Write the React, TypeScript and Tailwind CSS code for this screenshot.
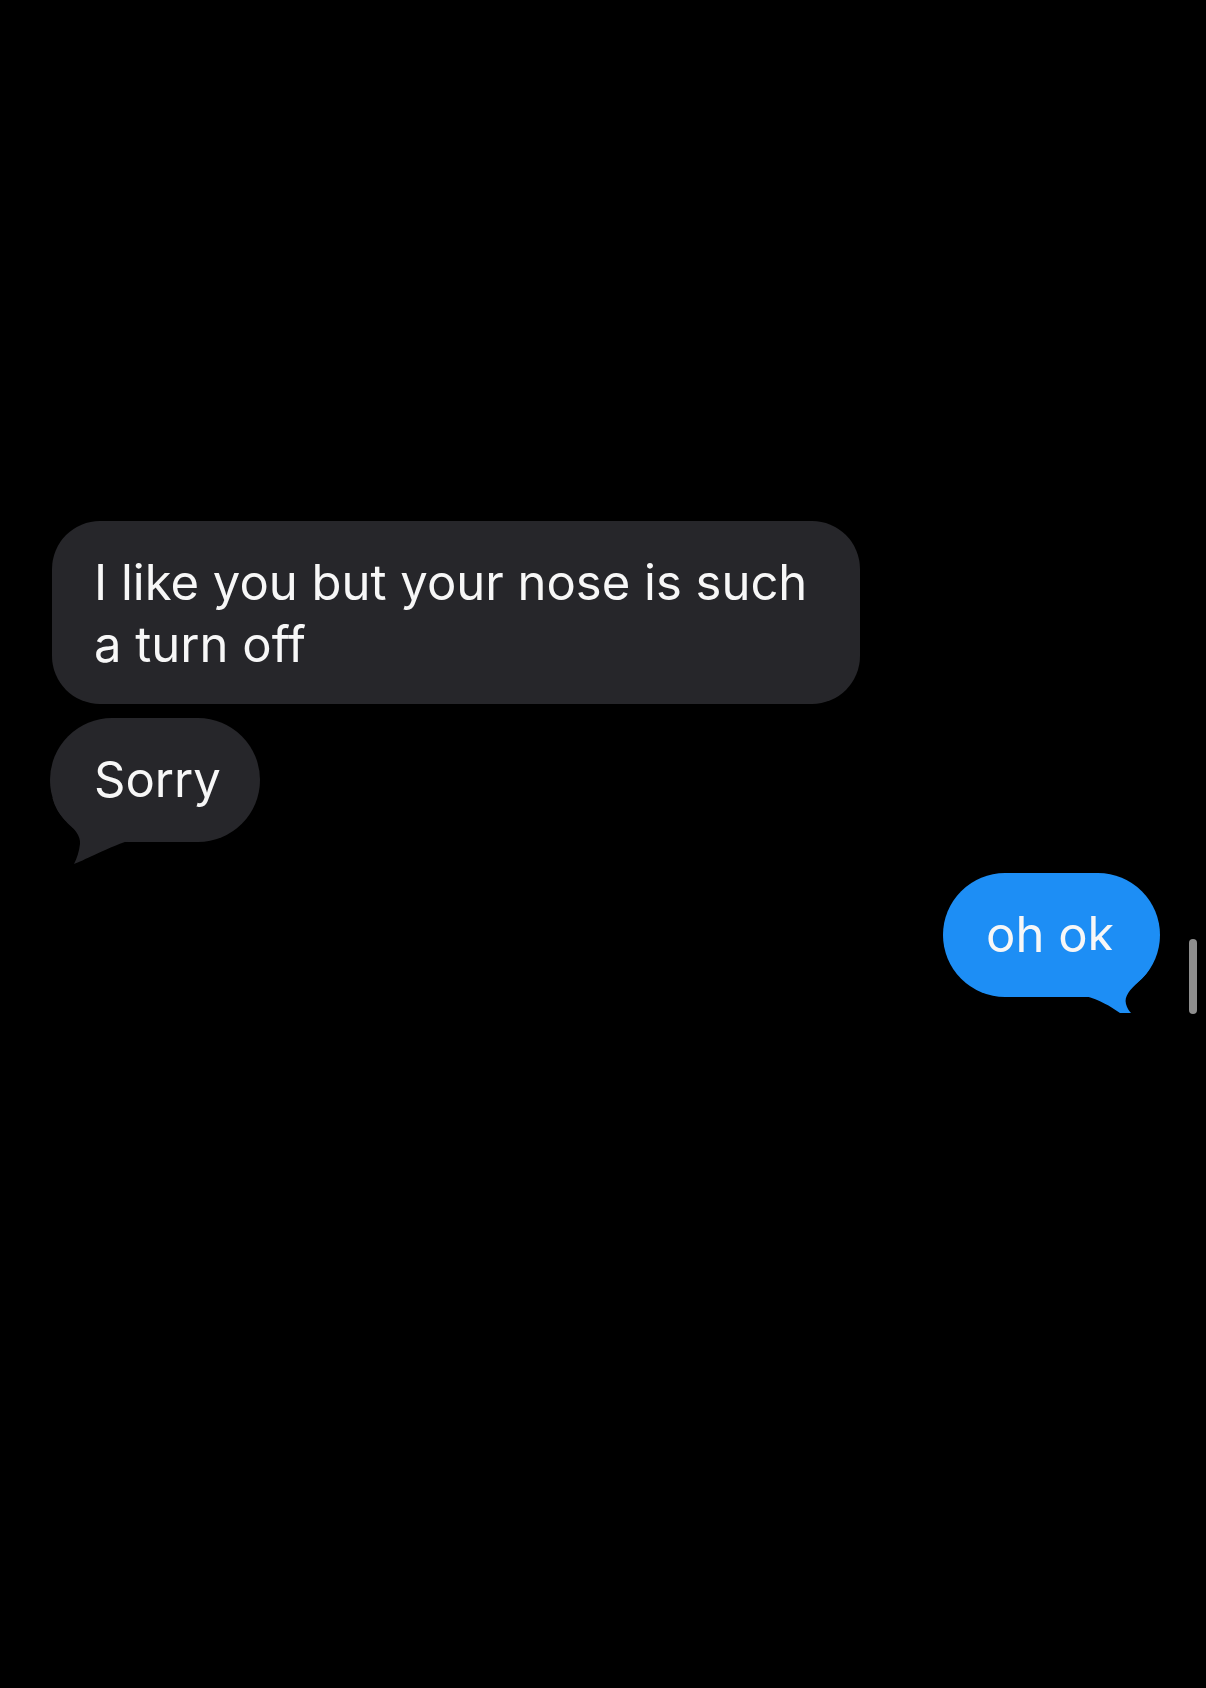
import React from "react";

export default function App() {
  const font = { fontFamily: "Inter, 'Noto Sans', sans-serif" };
  return (
    <div className="relative min-h-[1688px] w-full bg-black text-white [font-variant-ligatures:none]" style={font}>
      <div className="flex flex-col pt-[521px]">
        {/* Bubble 1 */}
        <div className="ml-[52px] w-[808px] rounded-[48px] bg-[#26262a] pl-[42px] pt-[31px] pb-[28px] text-[49px] leading-[62px] text-[#f7f7f7]">
          I like you but your nose is such
          <br />a turn off
        </div>

        {/* Sorry bubble */}
        <div className="relative ml-[50px] mt-[14px] w-[210px]">
          <div className="rounded-[62px] bg-[#26262a] pl-[44px] pt-[31px] pb-[31px] text-[49px] leading-[62px] text-[#f7f7f7]">
            Sorry
          </div>
          <svg
            className="absolute left-0 top-[80px]"
            width="90"
            height="70"
            viewBox="0 0 90 70"
          >
            <path
              d="M2.5 0 C5 9 9 16 15 22 C24 30 31 38 30 46 C29 54 27 60 24 66 C33 63 52 52 80 42 L80 0 Z"
              fill="#26262a"
            />
          </svg>
        </div>

        {/* Blue bubble */}
        <div className="mt-[31px] flex justify-end pr-[46px]">
          <div className="relative w-[217px]">
            <div className="rounded-[62px] bg-[#1d8ef5] pl-[43px] pt-[31px] pb-[31px] text-[49px] leading-[62px] text-[#f7f7f7]">
              oh ok
            </div>
            <svg
              className="absolute left-[137px] top-[77px]"
              width="90"
              height="70"
              viewBox="0 0 90 70"
            >
              <path
                d="M75 0 C74 12 70 22 58 32 C50 40 44 46 46 54 C47 58 49 61 51 63 L40 63 C30 56 20 50 5 46 L5 0 Z"
                fill="#1d8ef5"
              />
            </svg>
          </div>
        </div>
      </div>

      {/* scroll indicator */}
      <div className="absolute left-[1189px] top-[939px] h-[75px] w-[8px] rounded-full bg-[#8e8e8e]" />
    </div>
  );
}
